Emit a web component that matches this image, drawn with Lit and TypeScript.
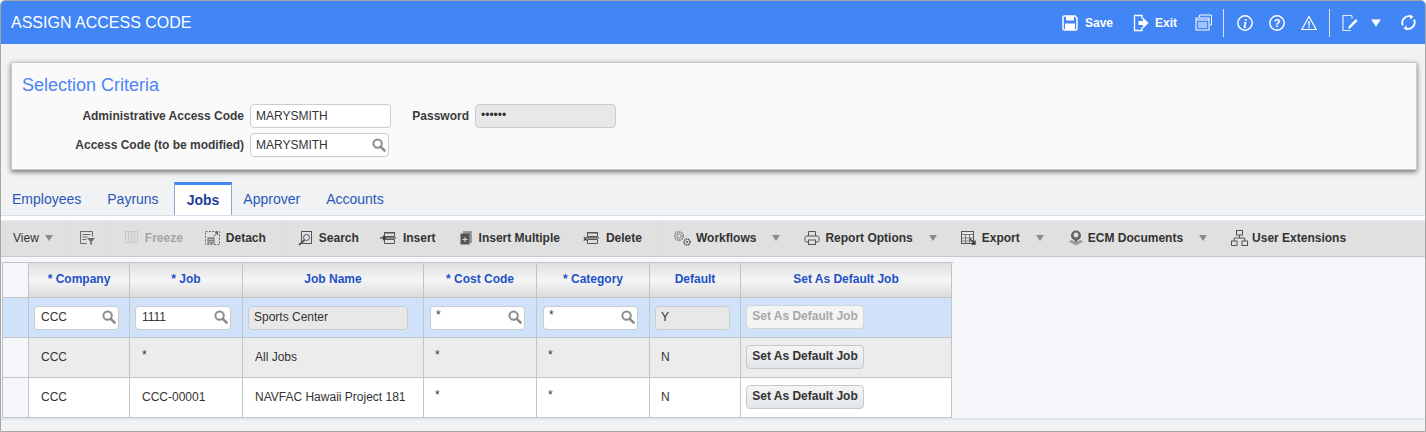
import { LitElement, html, css, svg } from 'lit';
import { customElement } from 'lit/decorators.js';

const searchIcon = html`<svg class="mag" viewBox="0 0 14 14" width="14" height="14"><circle cx="5.6" cy="5.6" r="4.2" fill="none" stroke="#8c8c8c" stroke-width="2"/><path d="M8.8 8.8L12.6 12.6" stroke="#8c8c8c" stroke-width="2.6" stroke-linecap="round"/></svg>`;

const toolIcons: Record<string, unknown> = {
  filter: svg`<path d="M1.500 1.500h12v5M1.500 1.500v12h6" fill="none" stroke="#6d6d6d"/><path d="M3.500 4.500h8M3.500 7h5M3.500 9.500h4" stroke="#6d6d6d"/><path d="M8 8h8l-3.200 3.400V15l-1.600-.8v-2.800z" fill="#6d6d6d"/>`,
  freeze: svg`<rect x="0.500" y="1.500" width="12" height="11" fill="none" stroke="#c9c9c9"/><path d="M3.500 2v10M6.500 2v10M9.500 2v10" stroke="#c9c9c9" stroke-width="1.200"/>`,
  detach: svg`<rect x="0.500" y="1.500" width="14" height="13" fill="none" stroke="#666" stroke-dasharray="2 1.400"/><rect x="3" y="8" width="6" height="5" fill="none" stroke="#666"/><path d="M3 10.500h6M5 8v5M7 8v5" stroke="#666" stroke-width=".7"/><path d="M8.500 6.500l4-4M10 2.500h2.500V5" fill="none" stroke="#666"/>`,
  search: svg`<rect x="3.500" y="1.500" width="10" height="12" fill="none" stroke="#555"/><circle cx="8.500" cy="7.500" r="3" fill="none" stroke="#555"/><path d="M6.500 10L1 15" stroke="#555" stroke-width="1.800"/>`,
  insert: svg`<path d="M4.500 6.500v-4h10v4zM4.500 9.500h10v4h-10z" fill="none" stroke="#555"/><path d="M4 2h11v1.500H4zM3 7.200h13v1.400H3z" fill="#555"/><path d="M0 7.900h5M3 5.700l2.300 2.200L3 10.100" fill="none" stroke="#333" stroke-width="1.300"/>`,
  multiple: svg`<path d="M3 1h9v12H3z" fill="#999"/><path d="M0.500 3.500h9v11h-9z" fill="#555"/><path d="M5 7v5M2.500 9.500h5" stroke="#ddd"/>`,
  delete: svg`<path d="M4.500 6.500v-4h10v4zM4.500 9.500h10v4h-10z" fill="none" stroke="#555"/><path d="M4 2h11v1.500H4zM4 7.200h12v1.400H4z" fill="#555"/><path d="M0.800 7l3.200 3.600M4 7l-3.200 3.600" stroke="#333" stroke-width="1.100"/>`,
  workflows: svg`<circle cx="6" cy="6" r="4.200" fill="none" stroke="#888" stroke-width="1.800" stroke-dasharray="1.600 .8"/><circle cx="6" cy="6" r="2.200" fill="none" stroke="#888"/><circle cx="14" cy="12" r="3" fill="none" stroke="#555" stroke-width="1.600" stroke-dasharray="1.400 .7"/><circle cx="14" cy="12" r="1" fill="#555"/>`,
  report: svg`<path d="M4.500 6V1.500h7V6" fill="none" stroke="#555"/><rect x="1" y="6" width="14" height="6" rx="1.500" fill="none" stroke="#555"/><rect x="4.500" y="10" width="7" height="4.500" fill="#e0e0e0" stroke="#555"/>`,
  export: svg`<rect x="0.500" y="1.500" width="12" height="12" fill="#e5e5e5" stroke="#555"/><path d="M0.500 4.500h12M4.500 4.500v9M8.500 4.500v9M.5 8h12M.5 11h12" stroke="#666" stroke-width=".8"/><path d="M9 9l5 5M14 10.500V14h-3.500" fill="none" stroke="#333" stroke-width="1.300"/>`,
  ecm: svg`<circle cx="8" cy="5.500" r="5" fill="#666"/><circle cx="8" cy="5" r="2.400" fill="#e0e0e0"/><path d="M6 9.500h4l-2 4z" fill="#666"/><path d="M0.500 11.500l7.500 4 7.500-4-3-1.600-4.500 2.400-4.500-2.400z" fill="#9a9a9a"/>`,
  tree: svg`<rect x="5.500" y="0.500" width="6" height="4.500" fill="none" stroke="#555"/><rect x="0.500" y="11" width="5.500" height="4.500" fill="none" stroke="#555"/><rect x="11" y="11" width="5.500" height="4.500" fill="none" stroke="#555"/><path d="M8.500 5v3M3.200 11V8h10.600v3" fill="none" stroke="#555"/>`,
};

// width is the layout slot: the label always starts 6px after it
const tool = (icon: string, label: string, width: number, cls = '') => html`
  <span class="tool ${cls}">
    <svg viewBox="0 0 ${width} 16" width=${width} height="16">${toolIcons[icon]}</svg>
    <span>${label}</span>
  </span>`;

const caret = html`<span class="caret"></span>`;

@customElement('app-root')
export class AppRoot extends LitElement {
  static styles = css`
    :host {
      display: block;
      width: 1426px;
      height: 432px;
      font-family: "Liberation Sans", Arial, sans-serif;
      font-size: 12px;
      color: #333;
    }
    .frame {
      box-sizing: border-box;
      height: 432px;
      border: 1px solid #a6a6a6;
      border-radius: 5px 5px 0 0;
      background: #f1f2f4;
      display: flex;
      flex-direction: column;
      overflow: hidden;
    }
    .header {
      height: 43px;
      flex: none;
      background: #4285f4;
      color: #fff;
      display: flex;
      align-items: center;
      padding-left: 10px;
      font-size: 16px;
    }
    .title { flex: 1; }
    .hbtn {
      display: flex;
      align-items: center;
      gap: 7px;
      font-weight: bold;
      font-size: 12px;
    }
    .hbtn.save { margin-right: 20px; }
    .hbtn.exit { margin-right: 18px; gap: 6px; }
    .hbtn svg, .hicon { display: block; }
    .actions { display: flex; align-items: center; height: 42px; padding-right: 8px; }
    .vsep { width: 1px; height: 28px; background: #d5e3fc; margin-right: 13px; }
    .m11 { margin-right: 11px; }
    .m12 { margin-right: 12px; }
    .m13 { margin-right: 13px; }
    .m16 { margin-right: 16px; }
    .m19 { margin-right: 19px; }
    .panel {
      flex: none;
      box-sizing: border-box;
      height: 108px;
      margin: 18px 8px 0 10px;
      background: #fafafa;
      border: 1px solid #ccc;
      box-shadow: 0 2px 5px rgba(0, 0, 0, .55);
      padding: 11px 10px 0;
    }
    .panel h2 {
      margin: 0;
      font-size: 18px;
      line-height: 22px;
      font-weight: normal;
      color: #4c85f5;
    }
    .form {
      display: grid;
      grid-template-columns: 228px 141px 84px 141px;
      grid-template-rows: 24px 24px;
      row-gap: 5px;
      margin-top: 8px;
      align-items: center;
    }
    .lbl { font-weight: bold; text-align: right; padding-right: 6px; color: #3c3c3c; }
    .input {
      box-sizing: border-box;
      height: 24px;
      display: flex;
      align-items: center;
      justify-content: space-between;
      background: #fff;
      border: 1px solid #ccc;
      border-radius: 4px;
      padding: 0 2px 0 5px;
      color: #333;
      white-space: nowrap;
    }
    .input.ro { background: #e8e8e8; }
    .input.lookup { width: 139px; }
    .input.p6 { padding-left: 6px; }
    .dots { font-size: 12px; padding-bottom: 2px; }
    .tabs {
      flex: none;
      display: flex;
      height: 33px;
      margin-top: 12px;
      align-items: stretch;
      font-size: 14px;
      border-bottom: 1px solid #d5deea;
    }
    .tab { padding: 9px 13px 0; color: #2a57b8; }
    .tab.first { padding-left: 11px; }
    .tab.on {
      box-sizing: border-box;
      height: 33px;
      background: #fff;
      border: 1px solid #8fa8c8;
      border-top: 3px solid #4285f4;
      border-bottom: 0;
      margin: 0 -2px -1px 2px;
      padding: 7px 12px 0;
      font-weight: bold;
      color: #1f3f96;
    }
    .strip { flex: none; box-sizing: border-box; height: 5px; background: #fff; border-bottom: 1px solid #dfeafa; }
    .toolbar {
      flex: none;
      height: 36px;
      box-sizing: border-box;
      background: #e0e0e0;
      border-bottom: 1px solid #c8c8c8;
      padding-bottom: 2px;
      display: flex;
      align-items: center;
      font-weight: bold;
      color: #333;
      white-space: nowrap;
    }
    .group {
      box-sizing: border-box;
      display: flex;
      align-items: center;
      height: 33px;
      border-right: 1px solid #dbe0e6;
      padding: 0 4px;
    }
    .group.view { padding: 0 13px 0 12px; font-weight: normal; gap: 6px; }
    .group.filter { padding: 0 11px 0 12px; }
    .group.frz { padding-left: 6px; padding-right: 5px; }
    .group.last { border-right: 0; }
    .group svg { display: block; overflow: visible; }
    .tool { display: flex; align-items: center; gap: 6px; padding: 0 11px; }
    .tool.off { color: #a5a5a5; }
    .tool.back1 { margin-left: -1px; }
    .tool.on2 { margin-left: 2px; }
    .tool.on1 { margin-left: 1px; }
    .caret {
      width: 0;
      height: 0;
      margin: 0 13px 0 5px;
      border-left: 4px solid transparent;
      border-right: 4px solid transparent;
      border-top: 6px solid #8a8a8a;
    }
    .group.view .caret { margin: 0; border-left-width: 4.5px; border-right-width: 4.5px; }
    .grid-wrap {
      flex: 1;
      background: #f4f6fa;
      padding: 5px 0 0 1px;
    }
    .grid {
      display: grid;
      width: 950px;
      grid-template-columns: 26px 101px 113px 181px 113px 113px 91px 211px;
      grid-template-rows: 35px 40px 40px 40px;
      border-top: 1px solid #c4c4c4;
      border-left: 1px solid #c4c4c4;
    }
    .c {
      box-sizing: border-box;
      border-right: 1px solid #c4c4c4;
      border-bottom: 1px solid #c4c4c4;
      display: flex;
      align-items: center;
      padding: 0 11px 2px;
      white-space: nowrap;
      overflow: hidden;
    }
    .h {
      justify-content: center;
      font-weight: bold;
      color: #1e50c8;
      background: linear-gradient(#dfdfdf, #f5f5f5 50%, #dcdcdc);
      padding: 0 0 3px;
    }
    .stub { background: #f4f6fa; padding: 0; }
    .sel { background: #d0e1fa; padding: 0 10px 0 5px; }
    .sel.r11 { padding-right: 11px; }
    .sel.r15 { padding-right: 15px; }
    .sel.l6 { padding: 0 11px 0 6px; }
    .alt { background: #ececec; }
    .plain { background: #fff; }
    .sel .input { width: 100%; padding-bottom: 2px; }
    .pad12 { padding: 0 12px 2px; }
    .star { padding-bottom: 3px; }
    .btn {
      box-sizing: border-box;
      flex: none;
      height: 24px;
      width: 118px;
      display: flex;
      align-items: center;
      justify-content: center;
      padding-bottom: 2px;
      font-weight: bold;
      color: #333;
      background: linear-gradient(#f4f4f4, #e2e5e8);
      border: 1px solid #c8c8c8;
      border-radius: 4px;
      margin: 0 0 0 -6px;
    }
    .btn.off { color: #a8a8a8; background: #f4f4f4; border-color: #d4d4d4; margin: -2px 0 0; }
    .foot { flex: none; height: 14px; border-top: 2px solid #e2e7ee; background: #f1f2f4; }
  `;

  private row(cls: string, job: string, name: string, def: string) {
    return html`
      <div class="c stub"></div>
      <div class="c ${cls} pad12">CCC</div>
      <div class="c ${cls} pad12"><span class="${job === '*' ? 'star' : ''}">${job}</span></div>
      <div class="c ${cls} pad12">${name}</div>
      <div class="c ${cls}"><span class="star">*</span></div>
      <div class="c ${cls}"><span class="star">*</span></div>
      <div class="c ${cls}">${def}</div>
      <div class="c ${cls}"><span class="btn">Set As Default Job</span></div>`;
  }

  render() {
    return html`
      <div class="frame">
        <div class="header">
          <div class="title">ASSIGN ACCESS CODE</div>
          <div class="actions">
            <span class="hbtn save">
              <svg viewBox="0 0 16 16" width="16" height="16"><path d="M1 2.500Q1 1 2.500 1H13l2 2v10.500Q15 15 13.500 15h-11Q1 15 1 13.500z" fill="none" stroke="#fff" stroke-width="1.500"/><path d="M4 1h8v4.500H4z" fill="#fff"/><path d="M3 8.500h10V15H3z" fill="#fff"/></svg>
              <span>Save</span>
            </span>
            <span class="hbtn exit">
              <svg viewBox="0 0 16 18" width="16" height="18"><path d="M9 5V1.500H1.500v15H9V13" fill="none" stroke="#fff" stroke-width="1.300"/><path d="M5.500 7H10V3.500L15.500 9 10 14.500V11H5.500z" fill="#fff"/></svg>
              <span>Exit</span>
            </span>
            <svg class="hicon m11" viewBox="0 0 17 17" width="17" height="17"><path d="M4.500 3V1h12v10h-2" fill="none" stroke="#fff"/><rect x="1" y="4" width="13" height="12" fill="#4285f4" stroke="#fff"/><path d="M1 6h13M3 9h9M3 11h9M3 13h9" stroke="#fff"/></svg>
            <span class="vsep"></span>
            <svg class="hicon m16" viewBox="0 0 16 16" width="16" height="16"><circle cx="8" cy="8" r="7.200" fill="none" stroke="#fff" stroke-width="1.500"/><text x="8" y="12.500" text-anchor="middle" fill="#fff" font-family="Liberation Serif" font-style="italic" font-weight="bold" font-size="12">i</text></svg>
            <svg class="hicon m16" viewBox="0 0 16 16" width="16" height="16"><circle cx="8" cy="8" r="7.200" fill="none" stroke="#fff" stroke-width="1.500"/><text x="8" y="12" text-anchor="middle" fill="#fff" font-family="Liberation Sans" font-weight="bold" font-size="11">?</text></svg>
            <svg class="hicon m12" viewBox="0 0 16 16" width="16" height="16"><path d="M8 1.500L15.200 14.500H.8z" fill="none" stroke="#fff" stroke-width="1.200"/><path d="M8 6v4.500M8 11.500v1.500" stroke="#fff" stroke-width="1.500"/></svg>
            <span class="vsep m12"></span>
            <svg class="hicon m13" viewBox="0 0 16 18" width="16" height="18"><path d="M10 1.500H1v15h8M10 1.500v3" fill="none" stroke="#dfe9fc" stroke-width="1.200"/><path d="M6 15l1-3 7-7 1.500 2-7 7z" fill="#fff"/></svg>
            <svg class="hicon m19" viewBox="0 0 10 8" width="10" height="8"><path d="M0 .5h10L5 7.500z" fill="#fff"/></svg>
            <svg class="hicon" viewBox="0 0 17 17" width="17" height="17"><path d="M3 11.500A6.500 6.500 0 0 1 11 2.500M14 5.500A6.500 6.500 0 0 1 6 14.500" fill="none" stroke="#fff" stroke-width="1.800"/><path d="M9.500 .5l4 2-3 3zM7.500 16.500l-4-2 3-3z" fill="#fff"/></svg>
          </div>
        </div>

        <section class="panel">
          <h2>Selection Criteria</h2>
          <div class="form">
            <div class="lbl">Administrative Access Code</div>
            <div class="input"><span>MARYSMITH</span></div>
            <div class="lbl">Password</div>
            <div class="input ro"><span class="dots">••••••</span></div>
            <div class="lbl">Access Code (to be modified)</div>
            <div class="input lookup"><span>MARYSMITH</span>${searchIcon}</div>
          </div>
        </section>

        <nav class="tabs">
          <span class="tab first">Employees</span>
          <span class="tab">Payruns</span>
          <span class="tab on">Jobs</span>
          <span class="tab">Approver</span>
          <span class="tab">Accounts</span>
        </nav>
        <div class="strip"></div>

        <div class="toolbar">
          <div class="group view"><span>View</span>${caret}</div>
          <div class="group filter"><svg viewBox="0 0 17 16" width="17" height="16">${toolIcons.filter}</svg></div>
          <div class="group frz">
            ${tool('freeze', 'Freeze', 14, 'off')}
            ${tool('detach', 'Detach', 15)}
          </div>
          <div class="group">
            ${tool('search', 'Search', 15)}
            ${tool('insert', 'Insert', 17, 'back1')}
            ${tool('multiple', 'Insert Multiple', 13, 'on2')}
            ${tool('delete', 'Delete', 17, 'on1')}
          </div>
          <div class="group last">
            ${tool('workflows', 'Workflows', 17)}
            ${caret}
            ${tool('report', 'Report Options', 15)}
            ${caret}
            ${tool('export', 'Export', 15)}
            ${caret}
            ${tool('ecm', 'ECM Documents', 14)}
            ${caret}
            ${tool('tree', 'User Extensions', 15)}
          </div>
        </div>

        <div class="grid-wrap">
          <div class="grid">
            <div class="c stub"></div>
            <div class="c h">* Company</div>
            <div class="c h">* Job</div>
            <div class="c h">Job Name</div>
            <div class="c h">* Cost Code</div>
            <div class="c h">* Category</div>
            <div class="c h">Default</div>
            <div class="c h">Set As Default Job</div>

            <div class="c stub sel"></div>
            <div class="c sel"><div class="input p6"><span>CCC</span>${searchIcon}</div></div>
            <div class="c sel r11"><div class="input p6"><span>1111</span>${searchIcon}</div></div>
            <div class="c sel r15"><div class="input ro"><span>Sports Center</span></div></div>
            <div class="c sel l6"><div class="input"><span class="star">*</span>${searchIcon}</div></div>
            <div class="c sel l6"><div class="input"><span class="star">*</span>${searchIcon}</div></div>
            <div class="c sel"><div class="input ro"><span>Y</span></div></div>
            <div class="c sel"><span class="btn off">Set As Default Job</span></div>

            ${this.row('alt', '*', 'All Jobs', 'N')}
            ${this.row('plain', 'CCC-00001', 'NAVFAC Hawaii Project 181', 'N')}
          </div>
        </div>
        <div class="foot"></div>
      </div>
    `;
  }
}
